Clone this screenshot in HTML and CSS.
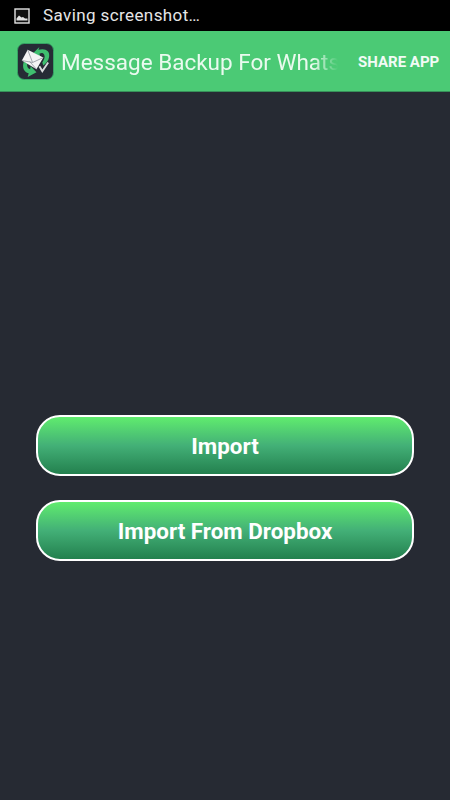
FILE: index.html
```html
<!DOCTYPE html>
<html lang="en">
<head>
    <meta charset="UTF-8">
    <meta name="viewport" content="width=device-width, initial-scale=1.0">
    <title>Message Backup For Whatsapp</title>
    <link rel="stylesheet" href="styles.css">
</head>
<body>
    <div class="status-bar">
        <svg class="status-icon" width="16" height="16" viewBox="0 0 16 16">
            <rect x="1" y="1" width="14" height="14" fill="#111" stroke="#e4e4e4" stroke-width="1.4"/>
            <path d="M2.5 12.5 L2.5 10.5 L5 7.5 L7.5 9.5 L9 9 L11 10.5 L13.5 10.5 L13.5 12.5 Z" fill="#e4e4e4"/>
        </svg>
        <span class="status-text">Saving screenshot…</span>
    </div>
    <div class="app-bar">
        <svg class="app-logo" width="37" height="37" viewBox="0 0 38 38">
            <rect x="0.5" y="0.5" width="37" height="37" rx="7" fill="#262b35" stroke="#37a567"/>
            <path d="M22 7 C29 5 34 8 33 14 C32.500 18 30 21 27 23 L26 20 C28 17 29 14 28 12 C27 10 25 10 23 11 L24 14 L17 10 L23 4 Z" fill="#3fbf6f"/>
            <path d="M7 19 C5 25 7 30 12 31 L11 35 L20 30 L14 24 L13.500 27 C11 26 10 24 10.500 21 Z" fill="#3fbf6f"/>
            <path d="M5 18 L11 7 L27 15 L20 27 Z" fill="#f4f4f4"/>
            <path d="M5 18 L16 20 L11 7 M16 20 L27 15 M13 19 L20 27" fill="none" stroke="#8d929a" stroke-width="0.8"/>
            <path d="M23 24 L26 29 L32 20" fill="none" stroke="#d8dadd" stroke-width="2"/>
        </svg>
        <div class="app-title">Message Backup For Whats</div>
        <div class="share-btn">SHARE APP</div>
    </div>
    <div class="content">
        <div class="big-btn">Import</div>
        <div class="big-btn">Import From Dropbox</div>
    </div>
</body>
</html>
```

FILE: styles.css
```css
* {
    box-sizing: border-box;
}
body {
    margin: 0;
    height: 800px;
    overflow: hidden;
    background-color: #262a33;
    font-family: Roboto, sans-serif;
    display: flex;
    flex-direction: column;
}
.status-bar {
    height: 31px;
    background-color: #000;
    color: #e6e6e6;
    display: flex;
    align-items: center;
    padding-left: 14px;
    flex-shrink: 0;
}
.status-icon {
    margin-right: 13px;
}
.status-text {
    font-size: 17px;
    letter-spacing: 0.4px;
    margin-top: -1px;
}
.app-bar {
    height: 61px;
    background-color: #4bca75;
    border-bottom: 1px solid #37915a;
    display: flex;
    align-items: center;
    padding-left: 17px;
    flex-shrink: 0;
}
.app-logo {
    flex-shrink: 0;
    margin-right: 7px;
}
.app-title {
    width: 277px;
    padding-top: 2px;
    font-size: 22.5px;
    color: #eafaef;
    white-space: nowrap;
    -webkit-mask-image: linear-gradient(to right, #000 91%, transparent 100%);
    mask-image: linear-gradient(to right, #000 91%, transparent 100%);
}
.share-btn {
    margin-left: 20px;
    padding-top: 2px;
    font-size: 15px;
    font-weight: 700;
    color: #f2fbf5;
    white-space: nowrap;
}
.content {
    flex: 1;
    padding: 323px 36px 0;
    display: flex;
    flex-direction: column;
    gap: 24px;
}
.big-btn {
    height: 61px;
    border: 2.5px solid #fff;
    border-radius: 24px;
    background: linear-gradient(to bottom, #60ec6e, #43b077 50%, #23804e);
    color: #fff;
    font-size: 22.4px;
    font-weight: 700;
    display: flex;
    align-items: center;
    justify-content: center;
}
```
